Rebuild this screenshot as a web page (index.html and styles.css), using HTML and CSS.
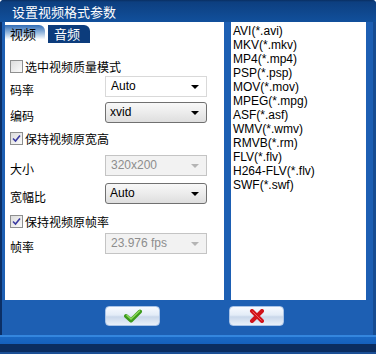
FILE: index.html
```html
<!DOCTYPE html>
<html lang="zh-CN">
<head>
    <meta charset="UTF-8">
    <title>设置视频格式参数</title>
    <link rel="stylesheet" href="styles.css">
</head>
<body>
    <div class="window">
        <div class="titlebar">设置视频格式参数</div>

        <div class="main">
            <div class="panel">
                <div class="tabs">
                    <div class="tab active">视频</div>
                    <div class="tab">音频</div>
                </div>

                <div class="form">
                    <div class="check first">
                        <span class="box"></span>选中视频质量模式
                    </div>

                    <div class="row tight">
                        <span class="label">码率</span>
                        <div class="select flat">Auto<span class="arrow"></span></div>
                    </div>

                    <div class="row">
                        <span class="label">编码</span>
                        <div class="select">xvid<span class="arrow"></span></div>
                    </div>

                    <div class="check">
                        <span class="box"><svg width="11" height="11" viewBox="0 0 11 11"><path d="M2 5.5 L4.5 8 L9 2.5" fill="none" stroke="#3a3aa0" stroke-width="1.6"/></svg></span>保持视频原宽高
                    </div>

                    <div class="row wide">
                        <span class="label">大小</span>
                        <div class="select disabled">320x200<span class="arrow"></span></div>
                    </div>

                    <div class="row mid">
                        <span class="label">宽幅比</span>
                        <div class="select">Auto<span class="arrow"></span></div>
                    </div>

                    <div class="check after-row">
                        <span class="box"><svg width="11" height="11" viewBox="0 0 11 11"><path d="M2 5.5 L4.5 8 L9 2.5" fill="none" stroke="#3a3aa0" stroke-width="1.6"/></svg></span>保持视频原帧率
                    </div>

                    <div class="row">
                        <span class="label">帧率</span>
                        <div class="select disabled">23.976 fps<span class="arrow"></span></div>
                    </div>
                </div>
            </div>

            <ul class="formats">
                <li>AVI(*.avi)</li>
                <li>MKV(*.mkv)</li>
                <li>MP4(*.mp4)</li>
                <li>PSP(*.psp)</li>
                <li>MOV(*.mov)</li>
                <li>MPEG(*.mpg)</li>
                <li>ASF(*.asf)</li>
                <li>WMV(*.wmv)</li>
                <li>RMVB(*.rm)</li>
                <li>FLV(*.flv)</li>
                <li>H264-FLV(*.flv)</li>
                <li>SWF(*.swf)</li>
            </ul>
        </div>

        <div class="actions">
            <button class="btn" title="确定">
                <svg width="20" height="14" viewBox="0 0 20 14">
                    <path d="M3 7 L8 11.5 L17 2.5" fill="none" stroke="#3c9a1c" stroke-width="4" stroke-linecap="round" stroke-linejoin="round"/>
                    <path d="M4 6.5 L8 10 L16.5 2" fill="none" stroke="#8bd85a" stroke-width="1.5" stroke-linecap="round"/>
                </svg>
            </button>
            <button class="btn" title="取消">
                <svg width="16" height="14" viewBox="0 0 16 14">
                    <path d="M3 2 L13 12 M13 2 L3 12" fill="none" stroke="#d0121a" stroke-width="4" stroke-linecap="round"/>
                    <path d="M3.5 2.5 L12.5 11.5" fill="none" stroke="#f25a5a" stroke-width="1"/>
                </svg>
            </button>
        </div>

        <div class="statusbar"></div>
    </div>
</body>
</html>
```

FILE: styles.css
```css
body {
    margin: 0;
    background-color: #fff;
}

.window {
    width: 376px;
    height: 354px;
    display: flex;
    flex-direction: column;
    background-color: #1d5fb3; /* frame blue */
    border-radius: 4px 4px 0 0;
    box-shadow: inset 2px 0 #0b2f66, inset -3px 0 #164c92;
    font-family: "Noto Sans CJK SC", "Liberation Sans", sans-serif;
    font-size: 12px;
    color: #000;
    overflow: hidden;
}

.titlebar {
    height: 22px;
    flex: none;
    padding-left: 12px;
    line-height: 23px;
    font-size: 13px;
    color: #fff;
    background: linear-gradient(#0a2f62 0, #0d3f80 2px, #11509c);
    border-radius: 4px 4px 0 0;
}

.main {
    display: flex;
    gap: 7px;
    height: 278px;
    flex: none;
    padding: 0 10px 0 5px;
}

.panel {
    width: 219px;
    background-color: #fff;
    padding-top: 3px;
}

.tabs {
    display: flex;
    gap: 3px;
    height: 18px;
}

.tab {
    width: 42px;
    padding-left: 6px;
    box-sizing: border-box;
    line-height: 18px;
    font-size: 13px;
    color: #fff;
    background-color: #0c3c7c;
    border-radius: 0 6px 0 0;
}

.tab.active {
    width: 40px;
    padding-left: 5px;
    color: #000;
    background: linear-gradient(#2f6cb6, #9dbde0 45%, #fff 80%);
}

.form {
    padding-left: 5px;
}

.check {
    display: flex;
    align-items: center;
    gap: 2px;
    height: 14px;
    margin-top: 8px;
}

.check.first {
    margin-top: 16px;
}

.check.after-row {
    margin-top: 10px;
}

.box {
    width: 11px;
    height: 11px;
    display: flex;
    border: 1px solid #8e8f8f;
    background: linear-gradient(135deg, #dcdcdc, #fbfbfb);
}

.row {
    display: flex;
    align-items: center;
    height: 21px;
    margin-top: 5px;
}

.row.tight {
    margin-top: 3px;
}

.row.wide {
    margin-top: 10px;
}

.row.mid {
    margin-top: 7px;
}

.label {
    width: 95px;
    padding-top: 5px;
}

.select {
    position: relative;
    width: 102px;
    height: 21px;
    box-sizing: border-box;
    padding-left: 4px;
    line-height: 19px;
    font-family: "Liberation Sans", sans-serif;
    font-size: 12px;
    border: 1px solid #707070;
    border-radius: 3px;
    background: linear-gradient(#f8f8f8, #ececec 50%, #dedede);
}

.select.flat {
    padding-left: 5px;
    border-color: #d9d9d9;
    border-radius: 0;
    background: #fff;
}

.select.disabled {
    padding-left: 5px;
    color: #8d8d8d;
    border-color: #c4c4c4;
    border-radius: 0;
    background: #f2f2f2;
}

.arrow {
    position: absolute;
    right: 7px;
    top: 8px;
    border-left: 4px solid transparent;
    border-right: 4px solid transparent;
    border-top: 4px solid #000;
}

.select.disabled .arrow {
    border-top-color: #b4b4b4;
}

.formats {
    width: 135px;
    margin: 0;
    padding: 2px 0 0 2px;
    box-sizing: border-box;
    list-style: none;
    background-color: #fff;
    font-family: "Liberation Sans", sans-serif;
    font-size: 12px;
    line-height: 14px;
}

.actions {
    display: flex;
    gap: 69px;
    height: 35px;
    flex: none;
    padding: 6px 0 0 105px;
    box-sizing: border-box;
}

.btn {
    width: 55px;
    height: 20px;
    padding: 0;
    display: flex;
    align-items: center;
    justify-content: center;
    border: 1px solid #a9c3e6;
    border-radius: 4px;
    background: linear-gradient(#f7faff, #e3ecf7 45%, #c9d7ea 55%, #e9f0f9);
    cursor: pointer;
}

.statusbar {
    height: 19px;
    flex: none;
    background: linear-gradient(#3486de 0, #3486de 2px, #1a68c4 2px, #1560bc 9px, #0b2d60 9px, #0b2d60 17px, #1b4f95 17px);
}
```
